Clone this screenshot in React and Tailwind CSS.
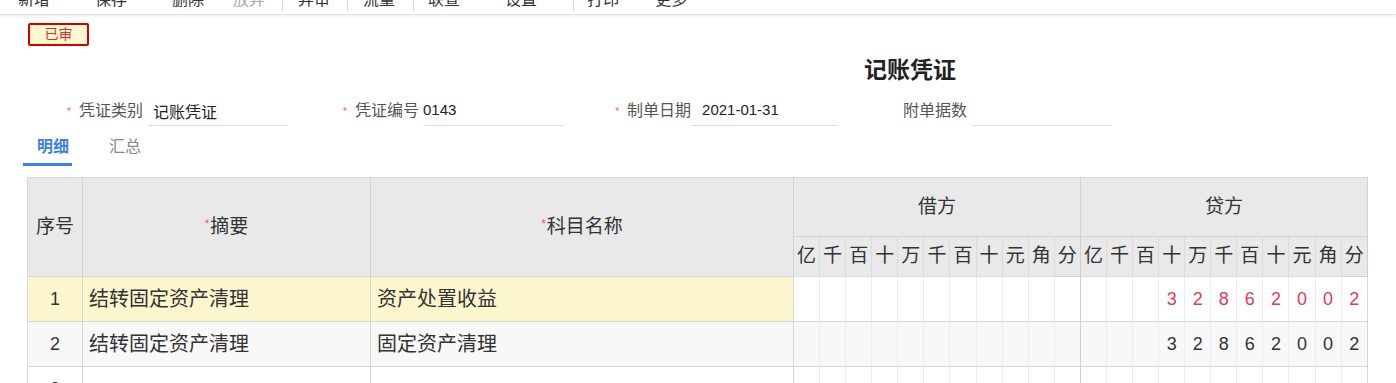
const units = ["亿", "千", "百", "十", "万", "千", "百", "十", "元", "角", "分"];

const toolbar = [
  { t: "新增", ml: "ml-[18px]" },
  { t: "保存", ml: "ml-[45px]" },
  { t: "删除", ml: "ml-[45px]" },
  { t: "放弃", ml: "ml-[29px]", muted: true },
  { sep: true, ml: "ml-[17px]" },
  { t: "弃审", ml: "ml-[15px]" },
  { sep: true, ml: "ml-[17px]" },
  { t: "流量", ml: "ml-[15px]" },
  { sep: true, ml: "ml-[18px]" },
  { t: "联查", ml: "ml-[14px]" },
  { t: "设置", ml: "ml-[45px]" },
  { sep: true, ml: "ml-[36px]" },
  { t: "打印", ml: "ml-[13px]" },
  { t: "更多", ml: "ml-[36px]" },
];

const rows = [
  { no: "1", summary: "结转固定资产清理", subject: "资产处置收益", credit: "32862002", red: true, active: true },
  { no: "2", summary: "结转固定资产清理", subject: "固定资产清理", credit: "32862002", striped: true },
  { no: "3", summary: "", subject: "", credit: "" },
];

function Field({ label, value, required, className, inputClass }) {
  return (
    <div className={`flex h-[30px] items-center ${className}`}>
      <span className="w-[18px] pr-[8px] text-right text-[10px] text-[#ee5c74]">{required ? "*" : ""}</span>
      <span className="text-[16px] text-[#555]">{label}</span>
      <div className={`flex h-[30px] items-center border-b border-[#dedede] text-[15px] text-[#222] ${inputClass}`}>
        {value}
      </div>
    </div>
  );
}

function Star() {
  return <span className="relative -top-[5px] mr-[1px] text-[12px] text-[#ee5c74]">*</span>;
}

export default function App() {
  return (
    <div className="h-[383px] w-[1396px] overflow-hidden bg-white font-['Liberation_Sans','Noto_Sans_CJK_SC',sans-serif] text-[#333]">
      {/* toolbar, scrolled mostly out of view */}
      <div className="h-[15px] overflow-hidden border-b border-[#e2e2e2] shadow-[0_2px_3px_rgba(0,0,0,0.06)]">
        <div className="-mt-[12px] flex items-center text-[16px] leading-[16px] text-[#333]">
          {toolbar.map((b, i) =>
            b.sep ? (
              <span key={i} className={`${b.ml} h-[24px] w-px bg-[#dcdcdc]`} />
            ) : (
              <span key={i} className={`${b.ml} ${b.muted ? "text-[#aaa]" : ""}`}>{b.t}</span>
            )
          )}
        </div>
      </div>

      <div className="ml-[28px] mt-[8px] flex h-[23px] w-[61px] items-center justify-center rounded-[2px] border-2 border-[#d40000] bg-[#fff6d2] text-[14px] text-[#d0342c]">
        已审
      </div>

      <div className="ml-[864px] mt-[9px] h-[30px] text-[23px] font-bold leading-[30px] text-[#222]">记账凭证</div>

      <div className="mt-[11px] flex">
        <Field className="ml-[61px]" required label="凭证类别" value="记账凭证" inputClass="ml-[5px] w-[140px] pl-[5px] pt-[4px] text-[16px]" />
        <Field className="ml-[49px]" required label="凭证编号" value="0143" inputClass="ml-[4px] w-[140px] h-[26px] self-start" />
        <Field className="ml-[46px]" required label="制单日期" value="2021-01-31" inputClass="w-[147px] pl-[11px]" />
        <Field className="ml-[47px]" label="附单据数" value="" inputClass="ml-[6px] w-[139px]" />
      </div>

      <div className="ml-[23px] flex h-[40px] items-stretch text-[16px]">
        <div className="w-[49px] border-b-[3px] border-[#3b82e6] pl-[14px] pt-[9px] font-semibold text-[#3b7fe3]">明细</div>
        <div className="ml-[37px] pt-[9px] text-[#888]">汇总</div>
      </div>

      <div className="ml-[27px] mt-[11px]">
        <table className="w-[1341px] table-fixed border-separate border-spacing-0 border-l border-t border-[#d8d8d8]">
          <colgroup>
            <col className="w-[55px]" />
            <col className="w-[288px]" />
            <col className="w-[423px]" />
            {units.concat(units).map((u, i) => (
              <col key={i} />
            ))}
          </colgroup>
          <thead className="bg-[#e9e9e9] text-[19px] font-normal text-[#333]">
            <tr className="h-[59px]">
              <th rowSpan={2} className="border-b border-r border-[#d3d3d3] font-normal">序号</th>
              <th rowSpan={2} className="border-b border-r border-[#d3d3d3] font-normal"><Star />摘要</th>
              <th rowSpan={2} className="border-b border-r border-[#d3d3d3] font-normal"><Star />科目名称</th>
              <th colSpan={11} className="border-b border-r border-[#d3d3d3] font-normal">借方</th>
              <th colSpan={11} className="border-b border-r border-[#d3d3d3] font-normal">贷方</th>
            </tr>
            <tr className="h-[40px]">
              {units.concat(units).map((u, i) => (
                <th
                  key={i}
                  className={`border-b border-r font-normal ${i === 10 || i === 21 ? "border-[#cfcfcf]" : "border-[#dcdcdc]"}`}
                >
                  {u}
                </th>
              ))}
            </tr>
          </thead>
          <tbody className="text-[20px]">
            {rows.map((r) => {
              const digits = r.credit.padStart(11, " ").split("");
              const lead = r.active ? "bg-[#fcf6cf]" : r.striped ? "bg-[#f8f8f8]" : "bg-white";
              const money = r.striped ? "bg-[#f8f8f8]" : "bg-white";
              return (
                <tr key={r.no} className="h-[45px]">
                  <td className={`${lead} border-b border-r border-[#d6d6d6] text-center text-[18px]`}>{r.no}</td>
                  <td className={`${lead} border-b border-r border-[#d6d6d6] pl-[6px]`}>{r.summary}</td>
                  <td className={`${lead} border-b border-r border-[#d6d6d6] pl-[6px]`}>{r.subject}</td>
                  {Array.from({ length: 11 }).map((_, i) => (
                    <td
                      key={"d" + i}
                      className={`${money} border-b border-r ${i === 10 ? "border-r-[#cfcfcf]" : "border-r-[#ececec]"} border-b-[#d6d6d6]`}
                    />
                  ))}
                  {digits.map((d, i) => (
                    <td
                      key={"c" + i}
                      className={`${money} border-b border-r text-center text-[18px] ${r.red ? "text-[#e23a52]" : "text-[#333]"} ${i === 10 ? "border-r-[#d6d6d6]" : "border-r-[#ececec]"} border-b-[#d6d6d6]`}
                    >
                      {d.trim()}
                    </td>
                  ))}
                </tr>
              );
            })}
          </tbody>
        </table>
      </div>
    </div>
  );
}
